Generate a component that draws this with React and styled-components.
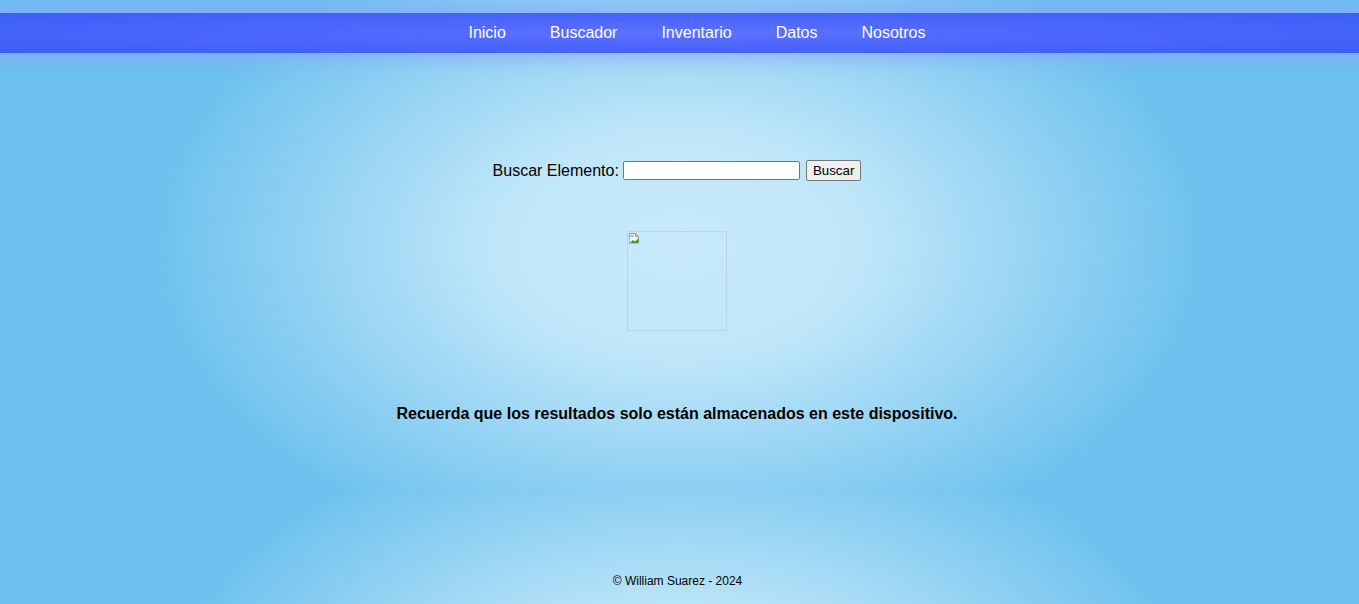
import React, { useState } from 'react';
import styled, { createGlobalStyle } from 'styled-components';

const GlobalStyle = createGlobalStyle`
  html {
    background: radial-gradient(ellipse 740px 460px at center, #c8eafa 0%, #bfe6f9 25%, #6cc1ee 72%);
    background-color: #6cc1ee;
    background-size: 100% 490px;
    background-repeat: repeat-y;
  }
  body {
    margin: 0;
    font-family: "Liberation Sans", Arial, sans-serif;
    color: #000;
  }
`;

const Page = styled.div`
  min-height: 100vh;
  display: flex;
  flex-direction: column;
  box-sizing: border-box;
  padding-top: 13px;
`;

const NavBar = styled.nav`
  height: 40px;
  background: radial-gradient(ellipse at center, #5d72ff 0%, #4c66fb 45%, #3a5ef8 100%);
  box-shadow: 0 0 18px 6px rgba(140, 160, 255, 0.65);
  position: relative;
  z-index: 1;
`;

const NavList = styled.ul`
  list-style: none;
  margin: 0;
  padding: 0 0 0 35px;
  height: 100%;
  display: flex;
  justify-content: center;
  align-items: center;
`;

const NavLink = styled.a`
  display: block;
  padding: 0 22px;
  color: #fff;
  font-size: 16px;
  text-decoration: none;
  cursor: pointer;
`;

const Main = styled.main`
  display: flex;
  flex-direction: column;
  align-items: center;
  padding-top: 107px;
  padding-right: 5px;
`;

const SearchForm = styled.form`
  display: flex;
  align-items: center;
  gap: 4px;
  height: 21px;
`;

const Label = styled.label`
  font-size: 16px;
`;

const TextInput = styled.input`
  width: 171px;
  height: 15px;
  padding: 1px 2px;
  border: 1px solid #767676;
  border-radius: 2px;
  background: #fff;
  font-size: 13.33px;
  font-family: "Liberation Sans", Arial, sans-serif;
`;

const Button = styled.button`
  height: 21px;
  margin-left: 2px;
  padding: 1px 6px;
  border: 1px solid #767676;
  border-radius: 2px;
  background: #efefef;
  font-size: 13.33px;
  font-family: "Liberation Sans", Arial, sans-serif;
  color: #000;
`;

const Picture = styled.div`
  width: 98px;
  height: 98px;
  margin-top: 50px;
  border: 1px solid rgba(175, 195, 205, 0.55);
  position: relative;
  svg {
    position: absolute;
    top: 1px;
    left: 1px;
  }
`;

const Notice = styled.p`
  margin: 74px 0 0;
  font-size: 16px;
  font-weight: bold;
  line-height: 18px;
`;

const Footer = styled.footer`
  margin-top: auto;
  padding-bottom: 16px;
  text-align: center;
  font-size: 12px;
  line-height: 14px;
  padding-right: 4px;
`;

const links = ['Inicio', 'Buscador', 'Inventario', 'Datos', 'Nosotros'];

const BrokenIcon = () => (
  <svg width="11" height="11" viewBox="0 0 11 11">
    <path d="M0.5 0.5h6l3 3v6.5h-9.5z" fill="#f4f4f4" stroke="#9a9a9a" />
    <path d="M6.5 0.5v3h3" fill="none" stroke="#9a9a9a" />
    <path d="M1 10l3-3 2 1.5 3.5-3V10z" fill="#3b9b2e" />
    <rect x="1.5" y="2" width="3" height="2" fill="#8fb6e8" />
  </svg>
);

export default function App() {
  const [query, setQuery] = useState('');
  return (
    <Page>
      <GlobalStyle />
      <NavBar>
        <NavList>
          {links.map(l => (
            <li key={l}>
              <NavLink>{l}</NavLink>
            </li>
          ))}
        </NavList>
      </NavBar>
      <Main>
        <SearchForm onSubmit={e => e.preventDefault()}>
          <Label htmlFor="buscar">Buscar Elemento:</Label>
          <TextInput id="buscar" type="text" value={query} onChange={e => setQuery(e.target.value)} />
          <Button type="submit">Buscar</Button>
        </SearchForm>
        <Picture>
          <BrokenIcon />
        </Picture>
        <Notice>Recuerda que los resultados solo están almacenados en este dispositivo.</Notice>
      </Main>
      <Footer>© William Suarez - 2024</Footer>
    </Page>
  );
}
